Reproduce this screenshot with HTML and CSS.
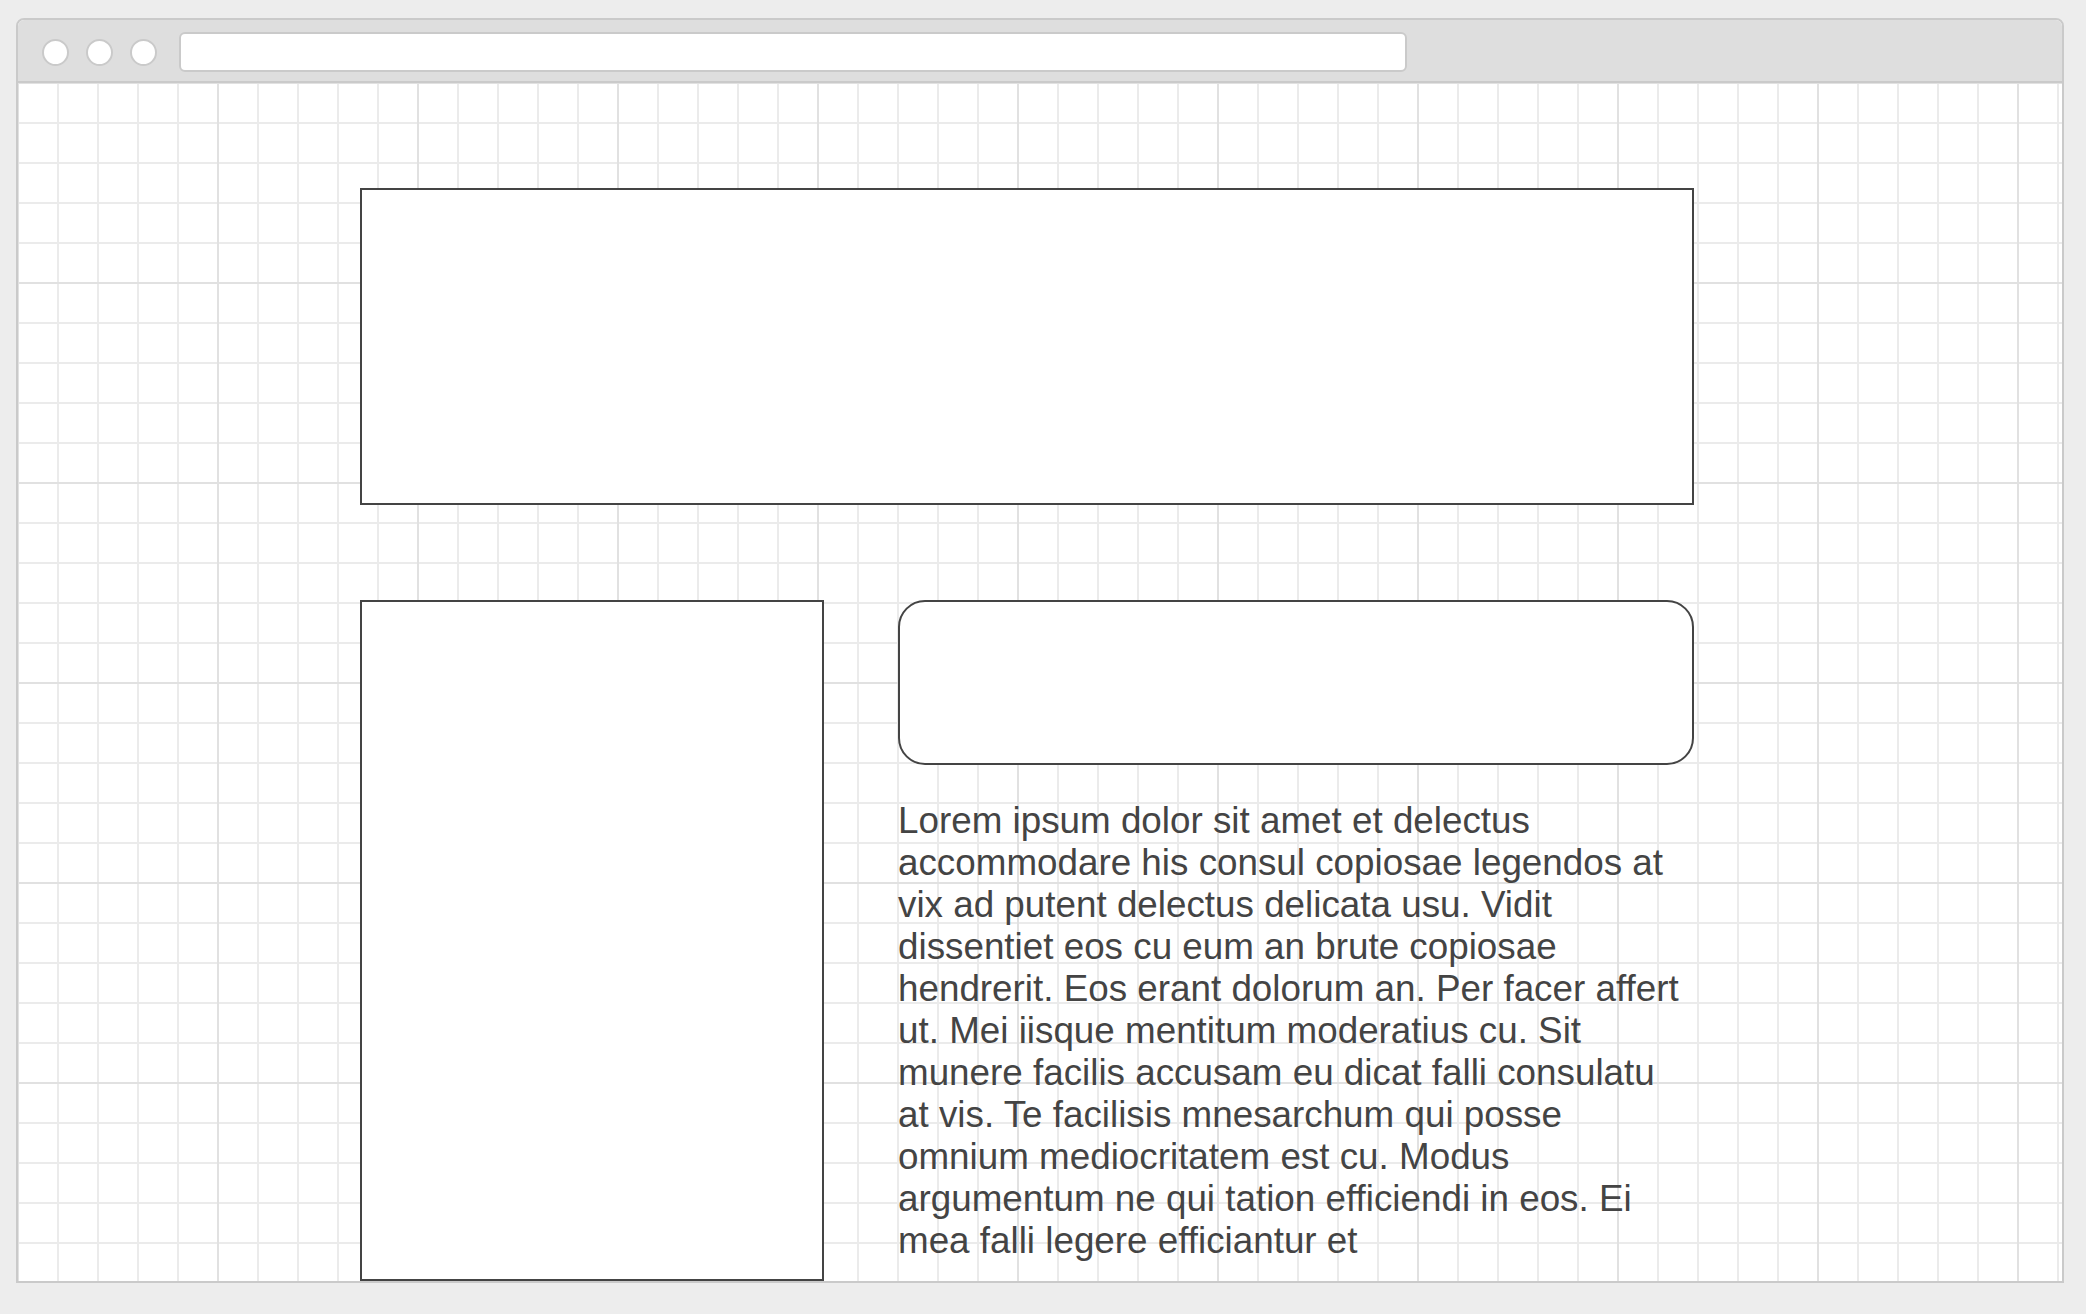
FILE: index.html
```html
<!DOCTYPE html>
<html lang="en">
<head>
    <meta charset="UTF-8">
    <meta name="viewport" content="width=device-width, initial-scale=1.0">
    <title>Wireframe</title>
    <link rel="stylesheet" href="styles.css">
</head>
<body>
    <div class="window">
        <div class="titlebar">
            <span class="dot"></span>
            <span class="dot"></span>
            <span class="dot"></span>
            <div class="address"></div>
        </div>
        <div class="canvas">
            <div class="hero"></div>
            <div class="row">
                <div class="sidebar"></div>
                <div class="main">
                    <div class="panel"></div>
                    <p class="copy">Lorem ipsum dolor sit amet et delectus accommodare his consul copiosae legendos at vix ad putent delectus delicata usu. Vidit dissentiet eos cu eum an brute copiosae hendrerit. Eos erant dolorum an. Per facer affert ut. Mei iisque mentitum moderatius cu. Sit munere facilis accusam eu dicat falli consulatu at vis. Te facilisis mnesarchum qui posse omnium mediocritatem est cu. Modus argumentum ne qui tation efficiendi in eos. Ei mea falli legere efficiantur et</p>
                </div>
            </div>
        </div>
    </div>
</body>
</html>
```

FILE: styles.css
```css
* {
    margin: 0;
    padding: 0;
    box-sizing: border-box;
}

body {
    background-color: #ededed;
    font-family: 'Liberation Sans', Arial, sans-serif;
    color: #444;
}

.window {
    width: 2048px;
    height: 1265px;
    margin: 18px 0 0 16px;
    border: 2px solid #cacaca;
    border-radius: 8px 8px 0 0;
    background-color: #fff;
    display: flex;
    flex-direction: column;
    overflow: hidden;
}

.titlebar {
    height: 63px;
    padding: 3px 0 0 24px;
    background-color: #dedede;
    border-bottom: 2px solid #cacaca;
    display: flex;
    align-items: center;
    gap: 17px;
    flex-shrink: 0;
}

.dot {
    width: 27px;
    height: 27px;
    border-radius: 50%;
    background-color: #fff;
    border: 2px solid #cacaca;
}

.address {
    width: 1228px;
    height: 40px;
    margin-left: 5px;
    background-color: #fff;
    border: 2px solid #cacaca;
    border-radius: 6px;
}

.canvas {
    flex: 1;
    overflow: hidden;
    padding: 105px 0 0 342px;
    background-color: #fff;
    background-image:
        linear-gradient(to right, #e1e1e1 2px, transparent 2px),
        linear-gradient(to bottom, #e1e1e1 2px, transparent 2px),
        linear-gradient(to right, #ebebeb 2px, transparent 2px),
        linear-gradient(to bottom, #ebebeb 2px, transparent 2px);
    background-size: 200px 200px, 200px 200px, 40px 40px, 40px 40px;
    background-position: -1px -1px;
}

.hero {
    width: 1334px;
    height: 317px;
    background-color: #fff;
    border: 2px solid #444;
}

.row {
    display: flex;
    gap: 74px;
    margin-top: 95px;
}

.sidebar {
    width: 464px;
    height: 681px;
    background-color: #fff;
    border: 2px solid #444;
}

.main {
    width: 796px;
}

.panel {
    height: 165px;
    background-color: #fff;
    border: 2px solid #444;
    border-radius: 27px;
}

.copy {
    width: 788px;
    margin-top: 35px;
    font-size: 36.8px;
    line-height: 42px;
    color: #444;
}
```
